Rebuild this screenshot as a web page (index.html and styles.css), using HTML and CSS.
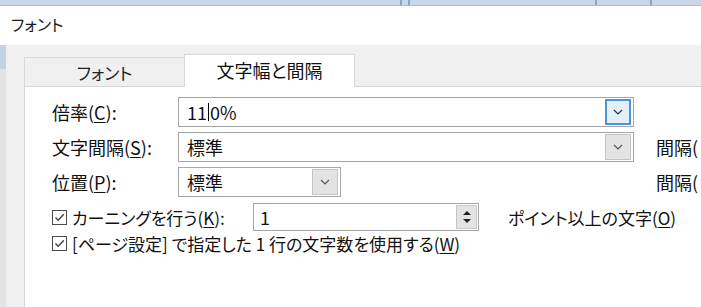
FILE: index.html
```html
<html>
<head>
    <meta charset="utf-8">
    <link rel="stylesheet" href="styles.css">
</head>
<body>

    <div class="topbar">
        <span class="seg seg-a"></span>
        <span class="seg seg-b"></span>
        <span class="seg seg-c"></span>
        <span class="seg seg-d"></span>
    </div>

    <div class="titlebar">フォント</div>

    <div class="dialog">
        <div class="edge"></div>
        <div class="sheet">
            <div class="tabs">
                <div class="tab">フォント</div>
                <div class="tab active">文字幅と間隔</div>
            </div>

            <div class="panel">
                <!-- Scale -->
                <div class="row">
                    <span class="lbl">倍率(<u>C</u>):</span>
                    <div class="combo wide">
                        <span class="val">11<span class="caret"></span>0%</span>
                        <span class="drop hot">
                            <svg width="10" height="6" viewBox="0 0 10 6"><path d="M1 1 L5 5 L9 1" fill="none" stroke="#333" stroke-width="1.2"/></svg>
                        </span>
                    </div>
                </div>
                <!-- Spacing -->
                <div class="row">
                    <span class="lbl">文字間隔(<u>S</u>):</span>
                    <div class="combo wide">
                        <span class="val">標準</span>
                        <span class="drop">
                            <svg width="10" height="6" viewBox="0 0 10 6"><path d="M1 1 L5 5 L9 1" fill="none" stroke="#555" stroke-width="1.2"/></svg>
                        </span>
                    </div>
                    <span class="side">間隔(</span>
                </div>
                <!-- Position -->
                <div class="row">
                    <span class="lbl">位置(<u>P</u>):</span>
                    <div class="combo short">
                        <span class="val">標準</span>
                        <span class="drop">
                            <svg width="10" height="6" viewBox="0 0 10 6"><path d="M1 1 L5 5 L9 1" fill="none" stroke="#555" stroke-width="1.2"/></svg>
                        </span>
                    </div>
                    <span class="side far">間隔(</span>
                </div>
                <!-- Kerning -->
                <div class="row check-row">
                    <span class="check-label">
                        <span class="box">
                            <svg width="13" height="13" viewBox="0 0 13 13"><path d="M2.5 6.5 L5.2 9.3 L10.8 3.2" fill="none" stroke="#444" stroke-width="1.4"/></svg>
                        </span>
                        <span>カーニングを行う(<u>K</u>):</span>
                    </span>
                    <div class="spin">
                        <span class="val">1</span>
                        <span class="arrows">
                            <span class="up"></span>
                            <span class="down"></span>
                        </span>
                    </div>
                    <span class="after">ポイント以上の文字(<u>O</u>)</span>
                </div>
                <!-- Grid chars -->
                <div class="row line-row">
                    <span class="check-label">
                        <span class="box">
                            <svg width="13" height="13" viewBox="0 0 13 13"><path d="M2.5 6.5 L5.2 9.3 L10.8 3.2" fill="none" stroke="#444" stroke-width="1.4"/></svg>
                        </span>
                        <span>[ページ設定] で指定した 1 行の文字数を使用する(<u>W</u>)</span>
                    </span>
                </div>
            </div>
        </div>
    </div>

</body>
</html>
```

FILE: styles.css
```css
* {
    margin: 0;
    padding: 0;
    box-sizing: border-box;
}

body {
    width: 701px;
    height: 307px;
    overflow: hidden;
    background-color: #f0f0f0;
    font-family: "Noto Sans CJK JP", "Noto Sans", sans-serif;
    font-feature-settings: "palt";
    color: #111;
}

u {
    text-decoration: underline;
    text-underline-offset: 2px;
}

/* Window behind the dialog */
.topbar {
    height: 6px;
    display: flex;
    background-color: #c9d7e8;
    border-bottom: 1px solid #a9bcd4;
}

.seg {
    height: 100%;
    border-right: 2px solid #8ea6c4;
}

.seg-a { width: 402px; }
.seg-b { width: 8px; }
.seg-c { width: 187px; }
.seg-d { width: 55px; }

/* Title bar */
.titlebar {
    height: 39px;
    background-color: #fff;
    padding-left: 11px;
    font-size: 16px;
    line-height: 36px;
    color: #1a1a1a;
}

/* Dialog body */
.dialog {
    display: flex;
    height: 262px;
}

.edge {
    width: 6px;
    flex-shrink: 0;
    background: linear-gradient(#c3d2e4 0, #c3d2e4 24px, #e4e4e4 24px);
}

.sheet {
    flex: 1;
    min-width: 0;
    padding-left: 18px;
    display: flex;
    flex-direction: column;
}

.tabs {
    height: 41px;
    display: flex;
    align-items: flex-end;
}

.tab {
    width: 161px;
    height: 29px;
    border: 1px solid #d9d9d9;
    border-bottom: none;
    background-color: #f0f0f0;
    text-align: center;
    font-size: 17px;
    line-height: 29px;
    color: #222;
}

.tab.active {
    width: 171px;
    height: 33px;
    margin-left: -1px;
    margin-bottom: -1px;
    background-color: #fff;
    position: relative;
    z-index: 1;
    font-size: 18px;
    line-height: 30px;
    color: #111;
}

.panel {
    flex: 1;
    background-color: #fff;
    border-left: 1px solid #d5d5d5;
    border-top: 1px solid #d5d5d5;
    padding: 10px 0 0 27px;
    display: flex;
    flex-direction: column;
    gap: 5px;
}

.row {
    display: flex;
    align-items: center;
    height: 30px;
    font-size: 18px;
    white-space: nowrap;
}

.lbl {
    width: 126px;
    flex-shrink: 0;
}

.combo {
    height: 30px;
    flex-shrink: 0;
    border: 1px solid #a6a6a6;
    background-color: #fff;
    display: flex;
    align-items: center;
    justify-content: space-between;
    padding: 1px 2px 1px 8px;
}

.combo.wide {
    width: 456px;
}

.combo.short {
    width: 163px;
}

.val {
    font-size: 18px;
    display: flex;
    align-items: center;
}

.caret {
    width: 1px;
    height: 18px;
    background-color: #000;
    margin: 0 1px;
}

.drop {
    width: 26px;
    height: 26px;
    display: flex;
    align-items: center;
    justify-content: center;
    background-color: #e3e3e3;
    border: 1px solid #c4c4c4;
}

.drop.hot {
    background-color: #e2f0fc;
    border: 2px solid #4f93d2;
}

.side {
    margin-left: 22px;
}

.side.far {
    margin-left: 315px;
}

/* Checkbox rows */
.check-row {
    height: 28px;
    margin-top: 1px;
    font-size: 17px;
}

.line-row {
    height: 22px;
    margin-top: -4px;
    font-size: 17px;
}

.check-label {
    display: flex;
    align-items: center;
    gap: 5px;
    flex-shrink: 0;
}

.check-row .check-label {
    width: 201px;
}

.box {
    width: 15px;
    height: 15px;
    border: 1px solid #4a4a4a;
    display: flex;
    align-items: center;
    justify-content: center;
    background-color: #fff;
}

.spin {
    width: 226px;
    height: 28px;
    flex-shrink: 0;
    border: 1px solid #a6a6a6;
    display: flex;
    align-items: center;
    justify-content: space-between;
    padding: 1px 1px 1px 6px;
}

.arrows {
    width: 21px;
    height: 24px;
    background-color: #e3e3e3;
    border: 1px solid #c8c8c8;
    display: flex;
    flex-direction: column;
    align-items: center;
    justify-content: space-around;
    padding: 3px 0;
}

.up,
.down {
    width: 0;
    height: 0;
    border-left: 4px solid transparent;
    border-right: 4px solid transparent;
}

.up {
    border-bottom: 4px solid #222;
}

.down {
    border-top: 4px solid #222;
}

.after {
    margin-left: 29px;
}
```
